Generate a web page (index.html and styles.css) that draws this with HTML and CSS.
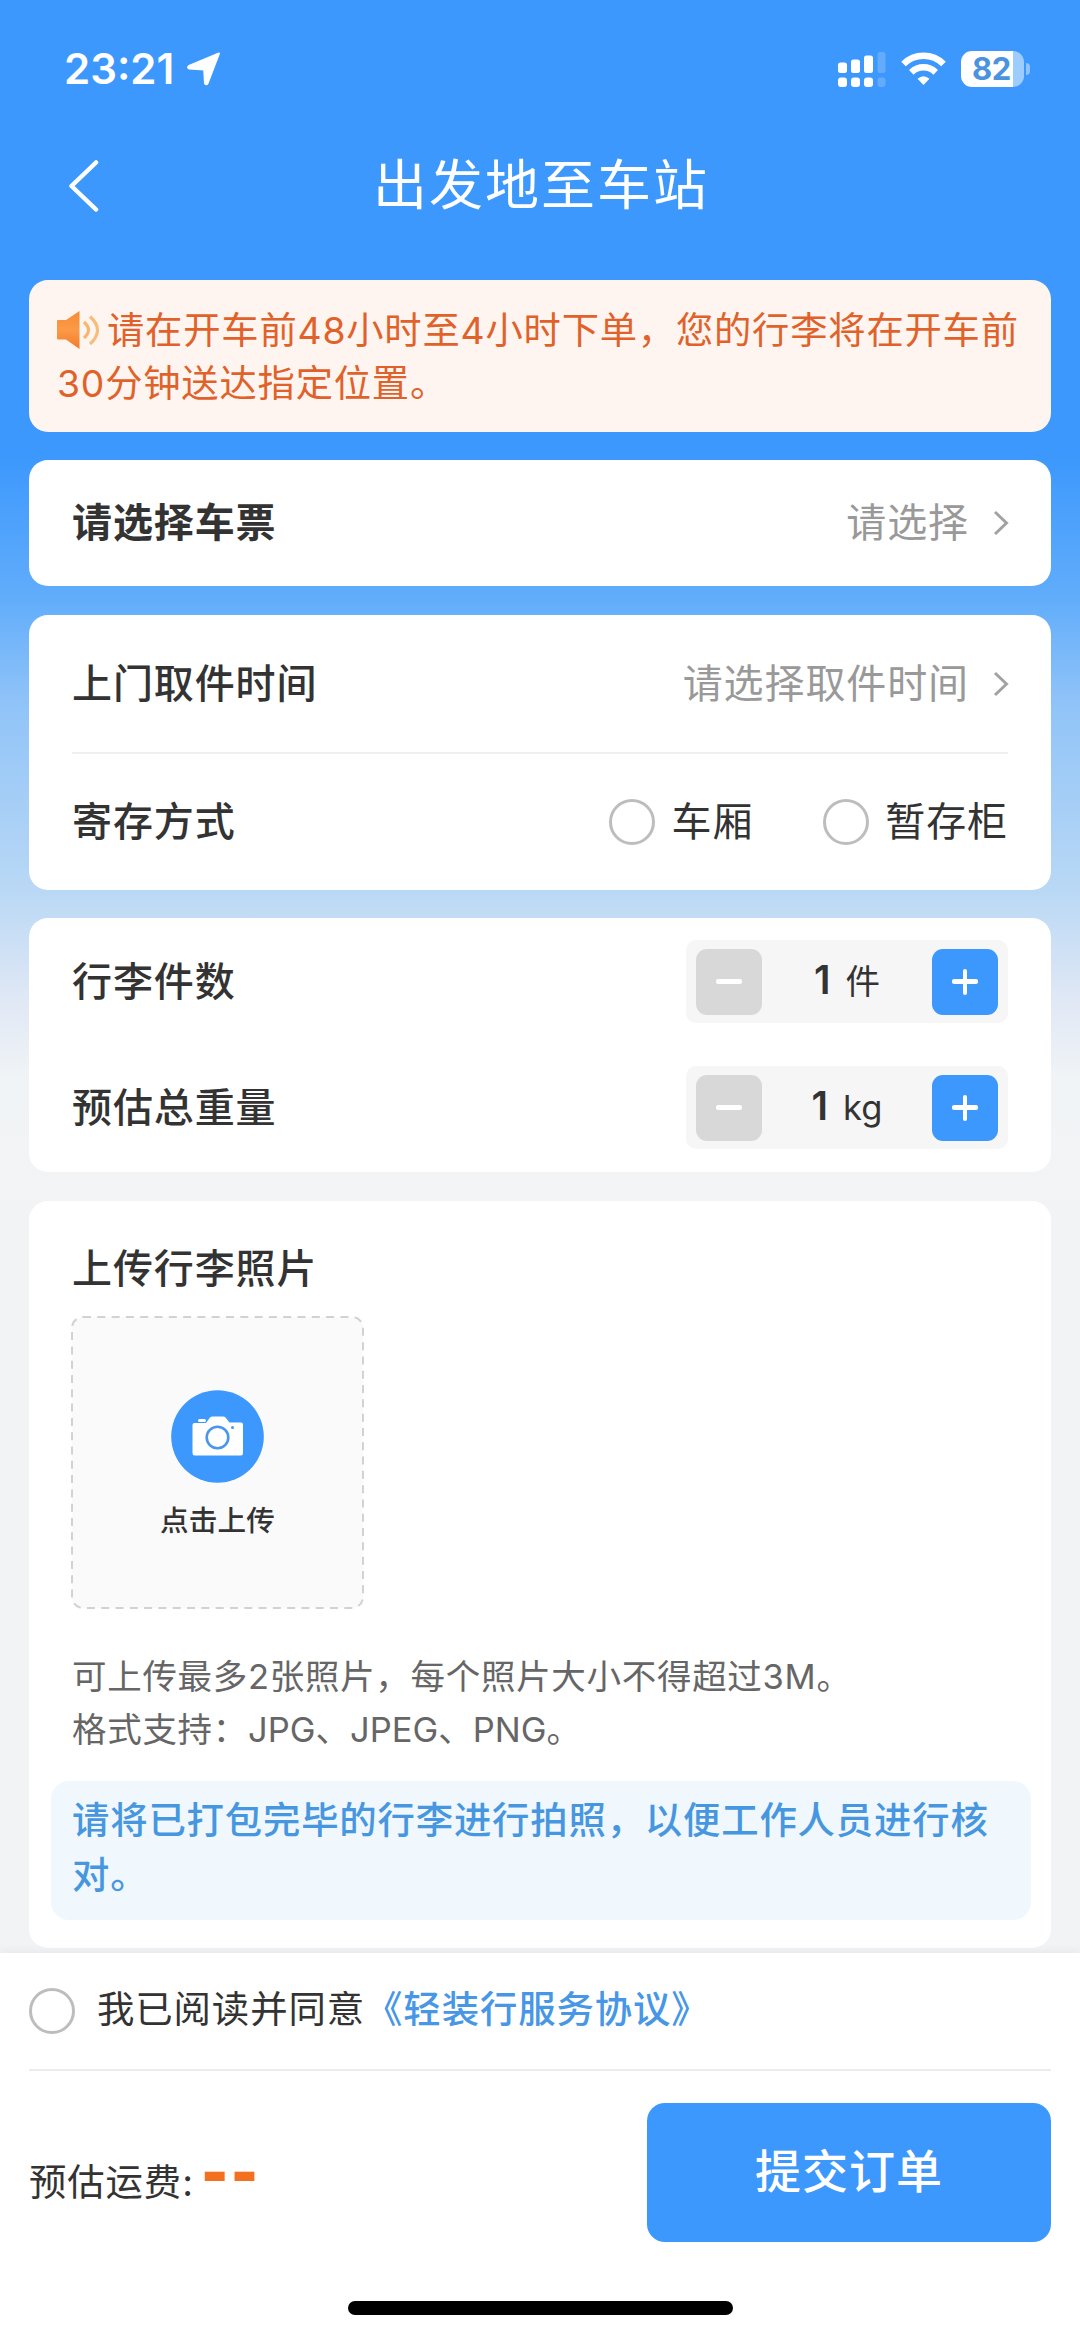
FILE: index.html
```html
<!DOCTYPE html>
<html lang="zh-CN">
<head>
<meta charset="utf-8">
<title>出发地至车站</title>
<link rel="stylesheet" href="styles.css">
</head>
<body>
<div class="page">
  <header class="status">
    <span class="clock">23:21</span>
    <svg class="locate" width="36" height="36" viewBox="0 0 36 36"><path d="M33 2.500 L21.500 32.500 Q20.500 34 19 32.500 L18.200 18.500 L3 17.500 Q1.200 16.500 3 15 Z" fill="#fff" stroke="#fff" stroke-width="2" stroke-linejoin="round"/></svg>
    <div class="indicators">
      <svg width="48" height="36" viewBox="0 0 48 36" fill="#fff">
        <rect x="0" y="11.500" width="9" height="10.500" rx="2.500"/><rect x="13" y="8.500" width="9" height="13.500" rx="2.500"/><rect x="26" y="4.500" width="9" height="17.500" rx="2.500"/><rect x="39.500" y="1" width="8" height="21" rx="2.500" opacity=".2"/>
        <rect x="0" y="26.500" width="9" height="9.500" rx="3"/><rect x="13" y="26.500" width="9" height="9.500" rx="3"/><rect x="26" y="26.500" width="9" height="9.500" rx="3"/><rect x="39.500" y="26.500" width="8" height="9.500" rx="3" opacity=".2"/>
      </svg>
      <svg class="wifi" width="45" height="34" viewBox="0 0 45 34" fill="none" stroke="#fff">
        <path d="M2.500 12 C13.500 1 31.500 1 42.500 12" stroke-width="6.500"/>
        <path d="M10.300 20.300 C17.300 13.600 27.700 13.600 34.700 20.300" stroke-width="6.500"/>
        <path d="M16.500 26.800 Q22.500 21.800 28.500 26.800 L22.500 33 Z" fill="#fff" stroke="none"/>
      </svg>
      <div class="battery"><span class="battery-level">82</span></div>
      <span class="battery-tip"></span>
    </div>
  </header>

  <nav class="navbar">
    <svg class="back" width="32" height="54" viewBox="0 0 32 54"><path d="M29 3.500 L4.500 27 L29 50.500" fill="none" stroke="#fff" stroke-width="4.500" stroke-linecap="round" stroke-linejoin="round"/></svg>
    <h1 class="title">出发地至车站</h1>
  </nav>

  <main class="content">
    <section class="notice">
      <svg class="speaker" width="43" height="38" viewBox="0 0 43 38">
        <defs><linearGradient id="horn" x1="0" y1="0" x2="0" y2="1"><stop offset="0" stop-color="#f98a32"/><stop offset=".5" stop-color="#fb9a48"/><stop offset="1" stop-color="#f47a28"/></linearGradient></defs>
        <path d="M1 9 H9 L22.500 0 V38 L9 28.500 H1 Q0 28.500 0 27.500 V10 Q0 9 1 9 Z" fill="url(#horn)"/>
        <path d="M27 11 Q36 19 27 27" fill="none" stroke="#f9b470" stroke-width="3.200"/>
        <path d="M33 5.500 Q48 19 33 33" fill="none" stroke="#f7bd7c" stroke-width="3.200"/>
      </svg>请在开车前48小时至4小时下单，您的行李将在开车前<br>30分钟送达指定位置。
    </section>

    <section class="card ticket">
      <div class="row">
        <span class="label strong">请选择车票</span>
        <span class="value">请选择<svg class="arrow" width="16" height="26" viewBox="0 0 16 26"><path d="M2 2 L13.500 13 L2 24" fill="none" stroke="#a2a2a2" stroke-width="3"/></svg></span>
      </div>
    </section>

    <section class="card pickup">
      <div class="row">
        <span class="label">上门取件时间</span>
        <span class="value">请选择取件时间<svg class="arrow" width="16" height="26" viewBox="0 0 16 26"><path d="M2 2 L13.500 13 L2 24" fill="none" stroke="#a2a2a2" stroke-width="3"/></svg></span>
      </div>
      <div class="row storage">
        <span class="label">寄存方式</span>
        <div class="options">
          <span class="option"><i class="radio"></i>车厢</span>
          <span class="option"><i class="radio"></i>暂存柜</span>
        </div>
      </div>
    </section>

    <section class="card luggage">
      <div class="row">
        <span class="label">行李件数</span>
        <div class="stepper">
          <span class="step minus"></span>
          <span class="count"><b>1</b>件</span>
          <span class="step plus"></span>
        </div>
      </div>
      <div class="row">
        <span class="label">预估总重量</span>
        <div class="stepper">
          <span class="step minus"></span>
          <span class="count"><b>1</b>kg</span>
          <span class="step plus"></span>
        </div>
      </div>
    </section>

    <section class="card photos">
      <h2 class="label photos-title">上传行李照片</h2>
      <div class="upload">
        <svg class="frame" width="293" height="293" viewBox="0 0 293 293"><rect x="1" y="1" width="291" height="291" rx="11" fill="#fafafa" stroke="#d2d2d2" stroke-width="2" stroke-dasharray="8 6.300"/></svg>
        <svg class="camera" width="93" height="93" viewBox="0 0 93 93">
          <circle cx="46.500" cy="46.500" r="46.300" fill="#3c98fc"/>
          <path d="M23.500 33 H35 L39 27.500 Q40 26.500 41.500 26.500 H52 Q53.500 26.500 54.500 27.500 L58.500 32.500 H70 Q72 32.500 72 34.500 V63 Q72 65.500 70 65.500 H23.500 Q21.500 65.500 21.500 63 V35 Q21.500 33 23.500 33 Z" fill="#fff"/>
          <rect x="27" y="29" width="8" height="3" rx="1.500" fill="#fff"/>
          <circle cx="46.500" cy="47.500" r="10.800" fill="none" stroke="#4a96ea" stroke-width="2.600"/>
          <circle cx="61.500" cy="37.500" r="1.500" fill="#4a96ea"/>
        </svg>
        <span class="upload-text">点击上传</span>
      </div>
      <p class="hint">可上传最多2张照片，每个照片大小不得超过3M。<br>格式支持：<span class="formats">JPG、JPEG、PNG。</span></p>
      <p class="tip">请将已打包完毕的行李进行拍照，以便工作人员进行核<br>对。</p>
    </section>
  </main>

  <footer class="footer">
    <div class="agreement"><i class="radio"></i><span class="agreement-text">我已阅读并同意<a class="link">《轻装行服务协议》</a></span></div>
    <div class="checkout">
      <span class="fee">预估运费:<b class="amount">--</b></span>
      <button class="submit">提交订单</button>
    </div>
    <div class="home"></div>
  </footer>
</div>
</body>
</html>
```
FILE: styles.css
```css
* { box-sizing: border-box; }

body {
  margin: 0;
  font-family: Inter, "Noto Sans CJK SC", sans-serif;
  font-size: 40px;
  letter-spacing: .9px;
  line-height: 60px;
  color: #333;
}

.page {
  display: flex;
  flex-direction: column;
  width: 1080px;
  height: 2337px;
  overflow: hidden;
  background: linear-gradient(#3c98fd 0, #3c98fd 455px, #62adfb 600px, #8fc3f8 700px, #b9d8f5 890px, #e0e8f5 1000px, #f1f4f6 1080px, #f2f3f5 1250px);
}

/* status bar */
.status {
  display: flex;
  align-items: center;
  height: 138px;
  padding: 0 50px 0 64px;
  color: #fff;
}
.clock {
  width: 122px;
  font-size: 42px;
  font-weight: 600;
  letter-spacing: 0;
}
.indicators {
  display: flex;
  align-items: center;
  margin-left: auto;
}
.wifi { margin: 0 15px 0 15px; }
.battery {
  width: 63px;
  height: 36px;
  border-radius: 11px;
  background: linear-gradient(90deg, #fff 52px, #9dccfe 52px);
}
.battery-level {
  display: block;
  padding-left: 11px;
  font-size: 31px;
  font-weight: 700;
  letter-spacing: -.5px;
  line-height: 36px;
  color: #4c93df;
}
.battery-tip {
  width: 4px;
  height: 12px;
  margin-left: 2px;
  border-radius: 0 5px 5px 0;
  background: #8fc4fe;
}

/* title bar */
.navbar {
  display: grid;
  grid-template-columns: 1fr auto 1fr;
  align-items: center;
  height: 142px;
  padding: 0 67px 46px;
  color: #fff;
}
.title {
  margin: 0;
  padding-left: 2px;
  font-size: 54px;
  font-weight: 400;
  letter-spacing: 2px;
  line-height: 80px;
}

/* content cards */
.content {
  display: flex;
  flex-direction: column;
  padding: 0 29px;
}
.notice {
  height: 152px;
  padding: 24px 28px;
  border-radius: 19px;
  background: #fff5f0;
  color: #e0622a;
  font-size: 37.3px;
  letter-spacing: .8px;
  line-height: 53px;
  white-space: nowrap;
}
.speaker {
  margin-right: 7px;
  vertical-align: -5px;
}
.card {
  border-radius: 19px;
  background: #fff;
}
.row {
  display: flex;
  align-items: center;
  justify-content: space-between;
}
.label {
  font-weight: 500;
}
.strong { font-weight: 700; }
.value {
  display: flex;
  align-items: center;
  margin-right: -1px;
  color: #999;
}
.arrow { margin-left: 24px; }
.ticket {
  height: 126px;
  margin-top: 28px;
  padding: 0 43px;
}
.ticket .row { height: 126px; }

.pickup {
  height: 275px;
  margin-top: 29px;
  padding: 0 43px;
}
.pickup .row { height: 137px; }
.pickup .storage { border-top: 2px solid #efefef; }
.options {
  display: flex;
  gap: 70px;
}
.option {
  display: flex;
  align-items: center;
  gap: 16px;
}
.radio {
  flex: none;
  width: 46px;
  height: 46px;
  border: 3px solid #bdbdbd;
  border-radius: 50%;
  background: #fff;
}

.luggage {
  display: flex;
  flex-direction: column;
  gap: 43px;
  height: 254px;
  margin-top: 28px;
  padding: 22px 43px;
}
.stepper {
  display: flex;
  align-items: center;
  justify-content: space-between;
  width: 322px;
  height: 83px;
  padding: 0 10px;
  border-radius: 10px;
  background: #f6f6f6;
}
.step {
  display: grid;
  place-items: center;
  width: 66px;
  height: 66px;
  border-radius: 11px;
  background: #3c98fc;
}
.step::before, .plus::after {
  content: "";
  grid-area: 1 / 1;
  width: 26px;
  height: 4.500px;
  border-radius: 2px;
  background: #fff;
}
.plus::after {
  width: 4.500px;
  height: 26px;
}
.minus { background: #d8d8d8; }
.count {
  padding-bottom: 2px;
  font-size: 34.5px;
  letter-spacing: 0;
}
.count b {
  margin-right: 15px;
  font-size: 39px;
  font-weight: 600;
}

.photos {
  height: 747px;
  margin-top: 29px;
  padding: 38px 20px 0 22px;
}
.photos-title {
  margin: 0 21px;
  font-size: 40px;
}
.upload {
  display: grid;
  justify-items: center;
  align-content: start;
  width: 293px;
  height: 293px;
  margin: 17px 20px 0;
}
.frame { grid-area: 1 / 1 / 4 / 2; }
.camera {
  grid-area: 1 / 1;
  margin-top: 74px;
}
.upload-text {
  grid-area: 2 / 1;
  margin-top: 18px;
  font-size: 28.6px;
  font-weight: 500;
  letter-spacing: .2px;
  line-height: 40px;
}
.hint {
  margin: 41px 21px 0;
  font-size: 34.5px;
  letter-spacing: .7px;
  line-height: 53px;
  color: #666;
}
.formats { letter-spacing: 0; }
.tip {
  height: 139px;
  margin: 25px 0 0;
  padding: 12px 21px;
  border-radius: 18px;
  background: #f0f8fe;
  font-size: 37.4px;
  font-weight: 500;
  letter-spacing: .8px;
  line-height: 55px;
  color: #4797e0;
  white-space: nowrap;
}

/* bottom bar */
.footer {
  display: flex;
  flex-direction: column;
  flex: none;
  height: 384px;
  margin-top: 5px;
  padding: 0 29px;
  background: #fff;
  box-shadow: 0 -3px 8px rgba(0, 0, 0, .04);
  font-size: 37.4px;
  letter-spacing: .9px;
}
.agreement {
  display: flex;
  align-items: center;
  gap: 22px;
  height: 118px;
  border-bottom: 2px solid #ececec;
}
.agreement-text { padding-bottom: 3px; }
.link {
  color: #4797e6;
  font-weight: 500;
}
.checkout {
  display: flex;
  align-items: center;
  justify-content: space-between;
  height: 139px;
  margin-top: 32px;
}
.fee {
  display: flex;
  align-items: center;
  padding-top: 20px;
}
.amount {
  margin-left: 8px;
  padding-bottom: 25px;
  font-family: "Liberation Sans", sans-serif;
  font-size: 78px;
  letter-spacing: 3.600px;
  line-height: 40px;
  color: #f37021;
}
.submit {
  width: 404px;
  height: 139px;
  padding: 0 0 3px;
  border: 0;
  border-radius: 18px;
  background: #3c98fc;
  font: 500 46px/66px Inter, "Noto Sans CJK SC", sans-serif;
  letter-spacing: 1px;
  color: #fff;
}
.home {
  width: 385px;
  height: 14px;
  margin: 59px auto 0;
  border-radius: 7px;
  background: #000;
}
```
